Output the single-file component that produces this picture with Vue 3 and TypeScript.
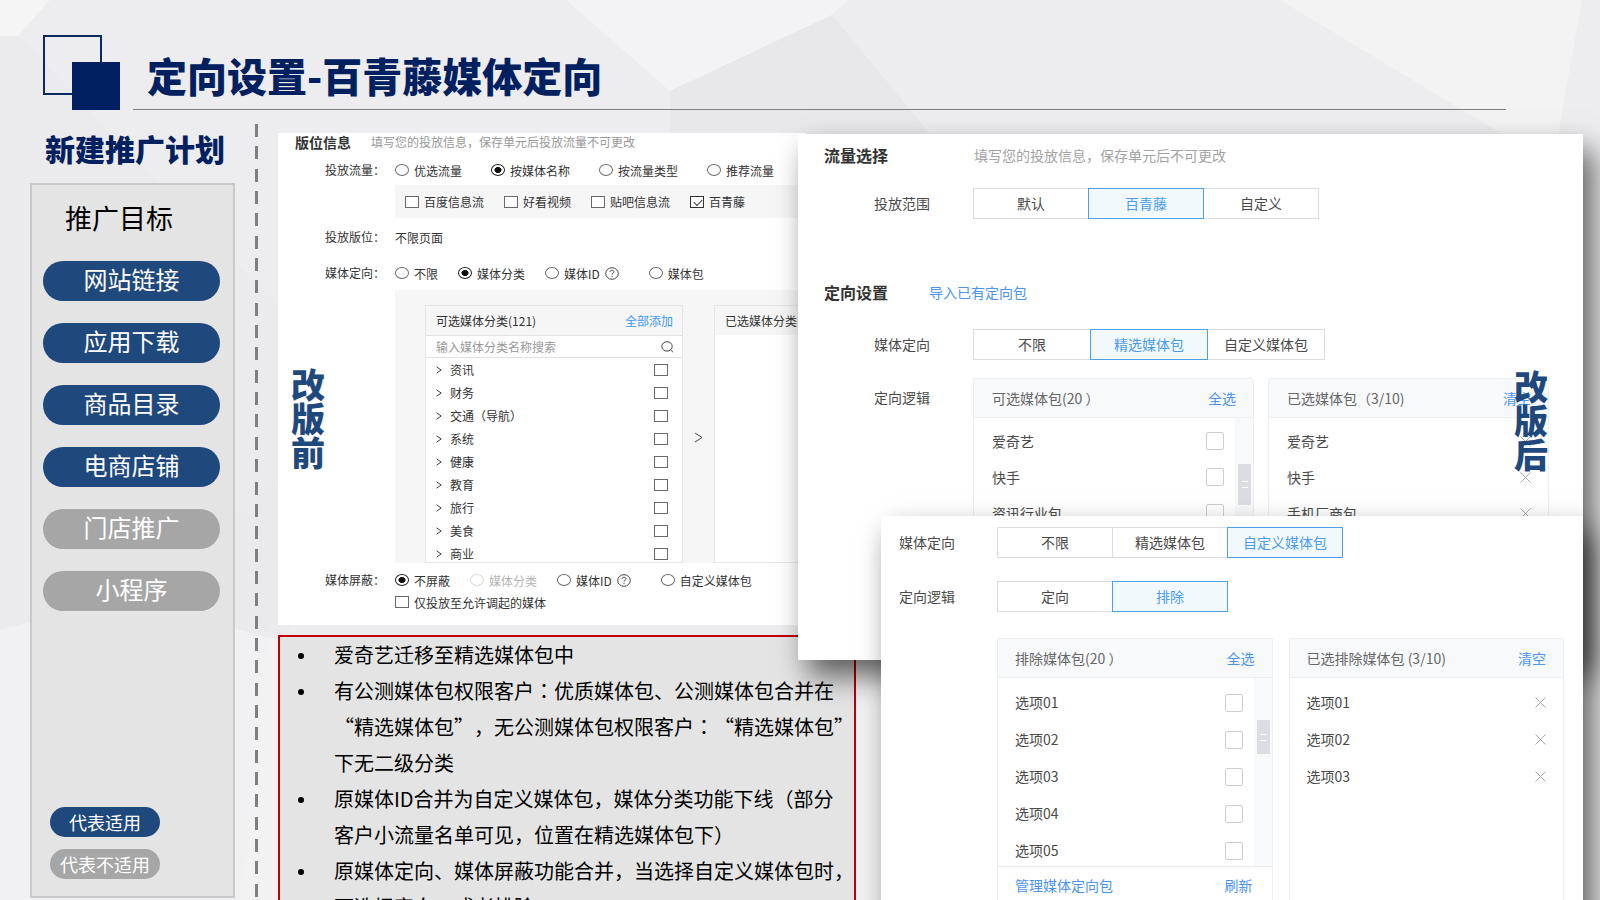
<script setup lang="ts">
import { ref } from 'vue'

interface Option { text: string; checked?: boolean; disabled?: boolean; help?: boolean; wide?: boolean }

const goals = [
  { text: '网站链接', on: true },
  { text: '应用下载', on: true },
  { text: '商品目录', on: true },
  { text: '电商店铺', on: true },
  { text: '门店推广', on: false },
  { text: '小程序', on: false },
]

const flows: Option[] = [
  { text: '优选流量', wide: true },
  { text: '按媒体名称', checked: true, wide: true },
  { text: '按流量类型', wide: true },
  { text: '推荐流量' },
]
const channels: Option[] = [
  { text: '百度信息流' },
  { text: '好看视频' },
  { text: '贴吧信息流' },
  { text: '百青藤', checked: true },
]
const targets: Option[] = [
  { text: '不限' },
  { text: '媒体分类', checked: true },
  { text: '媒体ID', help: true, wide: true },
  { text: '媒体包' },
]
const blocks: Option[] = [
  { text: '不屏蔽', checked: true },
  { text: '媒体分类', disabled: true },
  { text: '媒体ID', help: true, wide: true },
  { text: '自定义媒体包' },
]
const categories = ['资讯', '财务', '交通（导航）', '系统', '健康', '教育', '旅行', '美食', '商业']

const scopes = ['默认', '百青藤', '自定义']
const mediaModes = ['不限', '精选媒体包', '自定义媒体包']
const logics = ['定向', '排除']
const scope = ref('百青藤')
const modeA = ref('精选媒体包')
const modeB = ref('自定义媒体包')
const logic = ref('排除')

const packs = ['爱奇艺', '快手', '资讯行业包']
const chosenPacks = ['爱奇艺', '快手', '手机厂商包']
const options = ['选项01', '选项02', '选项03', '选项04', '选项05']
const chosenOptions = ['选项01', '选项02', '选项03']

const notes = [
  ['爱奇艺迁移至精选媒体包中'],
  ['有公测媒体包权限客户：优质媒体包、公测媒体包合并在', '“精选媒体包”，无公测媒体包权限客户：“精选媒体包”', '下无二级分类'],
  ['原媒体ID合并为自定义媒体包，媒体分类功能下线（部分', '客户小流量名单可见，位置在精选媒体包下）'],
  ['原媒体定向、媒体屏蔽功能合并，当选择自定义媒体包时，', '可选择定向，或者排除'],
]
// Colons are set centred in their cell, so they are split out of the line.
const pieces = (line: string) => line.split(/(：)/).filter((s) => s.length > 0)
const isMark = (s: string) => s === '：'
</script>

<template>
  <main class="slide">
    <svg class="backdrop" viewBox="0 0 1600 900" preserveAspectRatio="none" aria-hidden="true">
      <polygon points="0,0 50,0 18,36 0,36" fill="#f5f5f6" />
      <polygon points="0,36 18,36 300,330 240,900 0,900" fill="#eaeaec" opacity=".5" />
      <polygon points="566,0 848,0 832,15 670,91" fill="#f3f3f5" />
      <polygon points="670,91 832,15 930,134 670,134" fill="#e8e8ea" />
      <polygon points="1280,0 1582,0 1558,134 1502,134" fill="#f3f3f4" />
      <polygon points="0,630 110,600 280,640 900,640 900,900 0,900" fill="#f3f3f5" opacity=".7" />
      <polygon points="234,520 290,470 290,640 234,620" fill="#e9e9ec" opacity=".6" />
    </svg>

    <header class="head">
      <svg class="logo" width="77" height="75" viewBox="0 0 77 75" aria-hidden="true">
        <rect x="1" y="1" width="57" height="58" fill="none" stroke="#0b2a63" stroke-width="2" />
        <rect x="29" y="27" width="48" height="48" fill="#002060" />
      </svg>
      <h1 class="title">定向设置-百青藤媒体定向</h1>
    </header>

    <div class="body">
      <aside class="side">
        <h2 class="side-title">新建推广计划</h2>
        <div class="side-box">
          <h3 class="goal-title">推广目标</h3>
          <div class="goals">
            <button v-for="g in goals" :key="g.text" type="button" class="pill" :class="{ off: !g.on }">{{ g.text }}</button>
          </div>
          <div class="legend">
            <span class="tag">代表适用</span>
            <span class="tag off">代表不适用</span>
          </div>
        </div>
      </aside>

      <div class="dashes" aria-hidden="true"><i v-for="n in 35" :key="n"></i></div>

      <div class="work">
        <div class="left">
          <section class="old">
            <div class="stamp stamp-old">改版前</div>
            <div class="old-head"><h3>版位信息</h3><span>填写您的投放信息，保存单元后投放流量不可更改</span></div>

            <div class="row r1">
              <span class="lab">投放流量：</span>
              <label v-for="o in flows" :key="o.text" class="opt" :class="{ wide: o.wide }">
                <input type="radio" name="flow" :checked="o.checked" />{{ o.text }}
              </label>
            </div>
            <div class="bar">
              <label v-for="o in channels" :key="o.text" class="opt">
                <input type="checkbox" :checked="o.checked" />{{ o.text }}
              </label>
            </div>
            <div class="row r2"><span class="lab">投放版位：</span><span>不限页面</span></div>
            <div class="row r3">
              <span class="lab">媒体定向：</span>
              <label v-for="o in targets" :key="o.text" class="opt" :class="{ wide: o.wide }">
                <input type="radio" name="target" :checked="o.checked" />{{ o.text }}
                <svg v-if="o.help" class="help" width="14" height="13" viewBox="0 0 14 13" aria-hidden="true">
                  <ellipse cx="7" cy="6.5" rx="6.3" ry="5.8" />
                  <path d="M5 5.1C5 3.9 5.8 3.3 7 3.3s2 .6 2 1.6C9 6.2 7 6.2 7 7.6M7 8.9v1.1" />
                </svg>
              </label>
            </div>

            <div class="picker">
              <div class="cat">
                <div class="cat-head"><span>可选媒体分类(121)</span><a href="#">全部添加</a></div>
                <div class="search">
                  <input type="text" placeholder="输入媒体分类名称搜索" aria-label="输入媒体分类名称搜索" />
                  <svg width="13" height="12" viewBox="0 0 13 12" aria-hidden="true">
                    <ellipse cx="6" cy="5.4" rx="5.2" ry="4.7" /><path d="M9.6 8.9L12 11.2" />
                  </svg>
                </div>
                <ul class="cats">
                  <li v-for="c in categories" :key="c">
                    <svg width="6" height="8" viewBox="0 0 6 8" aria-hidden="true"><path d="M.5.8L5.2 4 .5 7.2" /></svg>
                    <label><span>{{ c }}</span><input type="checkbox" /></label>
                  </li>
                </ul>
              </div>
              <svg class="to" width="9" height="11" viewBox="0 0 9 11" aria-hidden="true"><path d="M1 1l7 4.5L1 10" /></svg>
              <div class="cat rest"><div class="cat-head"><span>已选媒体分类(0)</span></div></div>
            </div>

            <div class="row r4">
              <span class="lab">媒体屏蔽：</span>
              <label v-for="o in blocks" :key="o.text" class="opt" :class="{ wide: o.wide, dim: o.disabled }">
                <input type="radio" name="block" :checked="o.checked" :disabled="o.disabled" />{{ o.text }}
                <svg v-if="o.help" class="help" width="14" height="13" viewBox="0 0 14 13" aria-hidden="true">
                  <ellipse cx="7" cy="6.5" rx="6.3" ry="5.8" />
                  <path d="M5 5.1C5 3.9 5.8 3.3 7 3.3s2 .6 2 1.6C9 6.2 7 6.2 7 7.6M7 8.9v1.1" />
                </svg>
              </label>
            </div>
            <div class="row r5"><label class="opt"><input type="checkbox" />仅投放至允许调起的媒体</label></div>
          </section>

          <section class="notes">
            <ul>
              <li v-for="(n, i) in notes" :key="i">
                <span v-for="line in n" :key="line" class="line"><template v-for="(p, k) in pieces(line)" :key="k"><span :class="{ mark: isMark(p) }">{{ p }}</span></template></span>
              </li>
            </ul>
          </section>
        </div>

        <div class="right">
          <section class="card one">
            <div class="stamp stamp-new">改版后</div>
            <div class="card-head"><h3>流量选择</h3><span class="hint">填写您的投放信息，保存单元后不可更改</span></div>
            <div class="field f1">
              <span class="name">投放范围</span>
              <div class="seg">
                <button v-for="s in scopes" :key="s" type="button" :class="{ on: s === scope }" @click="scope = s">{{ s }}</button>
              </div>
            </div>
            <div class="card-head h2"><h3>定向设置</h3><a href="#">导入已有定向包</a></div>
            <div class="field f2">
              <span class="name">媒体定向</span>
              <div class="seg broad">
                <button v-for="s in mediaModes" :key="s" type="button" :class="{ on: s === modeA }" @click="modeA = s">{{ s }}</button>
              </div>
            </div>
            <div class="field f3">
              <span class="name top">定向逻辑</span>
              <div class="boxes">
                <div class="box">
                  <div class="box-head"><span>可选媒体包(20 ）</span><a href="#">全选</a></div>
                  <div class="box-body">
                    <ul><li v-for="p in packs" :key="p"><label><span>{{ p }}</span><input type="checkbox" /></label></li></ul>
                    <div class="track"><i></i></div>
                  </div>
                </div>
                <div class="box">
                  <div class="box-head"><span>已选媒体包（3/10)</span><a href="#">清空</a></div>
                  <ul class="picked">
                    <li v-for="p in chosenPacks" :key="p">{{ p }}
                      <button type="button" :aria-label="p"><svg width="11" height="11" viewBox="0 0 11 11"><path d="M.5.5l10 10M10.5.5l-10 10" /></svg></button>
                    </li>
                  </ul>
                </div>
              </div>
            </div>
          </section>

          <section class="card two">
            <div class="field">
              <span class="name">媒体定向</span>
              <div class="seg">
                <button v-for="s in mediaModes" :key="s" type="button" :class="{ on: s === modeB }" @click="modeB = s">{{ s }}</button>
              </div>
            </div>
            <div class="field g2">
              <span class="name">定向逻辑</span>
              <div class="seg">
                <button v-for="s in logics" :key="s" type="button" :class="{ on: s === logic }" @click="logic = s">{{ s }}</button>
              </div>
            </div>
            <div class="boxes">
              <div class="box">
                <div class="box-head"><span>排除媒体包(20 ）</span><a href="#">全选</a></div>
                <div class="box-body">
                  <ul><li v-for="p in options" :key="p"><label><span>{{ p }}</span><input type="checkbox" /></label></li></ul>
                  <div class="track"><i></i></div>
                </div>
                <div class="box-foot"><a href="#">管理媒体定向包</a><a href="#">刷新</a></div>
              </div>
              <div class="box">
                <div class="box-head"><span>已选排除媒体包 (3/10)</span><a href="#">清空</a></div>
                <ul class="picked">
                  <li v-for="p in chosenOptions" :key="p">{{ p }}
                    <button type="button" :aria-label="p"><svg width="11" height="11" viewBox="0 0 11 11"><path d="M.5.5l10 10M10.5.5l-10 10" /></svg></button>
                  </li>
                </ul>
              </div>
            </div>
          </section>
        </div>
      </div>
    </div>
  </main>
</template>

<style>
body { background: #ededef; }
</style>

<style scoped>
* { box-sizing: border-box; margin: 0; padding: 0; }
ul { list-style: none; }
a { color: #4a94ee; text-decoration: none; }
button, input { font: inherit; color: inherit; }
.slide {
  position: relative;
  display: flex;
  flex-direction: column;
  height: 100vh;
  overflow: hidden;
  background: #ededef;
  font-family: "Noto Sans CJK SC", "Liberation Sans", sans-serif;
  text-spacing-trim: space-all;
  white-space: nowrap;
}
.backdrop { position: absolute; inset: 0; width: 100%; height: 100%; }

.head { position: relative; display: flex; padding: 35px 94px 0 43px; }
.logo { flex: none; }
.title {
  flex: 1;
  height: 75px;
  margin-left: 13px;
  padding-left: 14px;
  border-bottom: 1px solid #7f7f7f;
  font-size: 40px;
  line-height: 80px;
  font-weight: 900;
  color: #002060;
}

.body { position: relative; flex: 1; display: flex; min-height: 0; padding: 0 17px 0 30px; }
.side { flex: none; width: 205px; display: flex; flex-direction: column; padding: 18px 0 2px; }
.side-title { font-size: 30px; line-height: 40px; margin-bottom: 15px; padding-left: 15px; font-weight: 900; color: #002060; }
.side-box {
  flex: 1;
  display: flex;
  flex-direction: column;
  padding: 15px 13px 17px 11px;
  border: 2px solid #c9c9cb;
  background: #e4e4e4;
}
.goal-title { margin: 0 0 25px 22px; font-size: 27px; line-height: 36px; font-weight: 400; color: #000; }
.goals { display: flex; flex-direction: column; gap: 22px; }
.pill { height: 40px; padding-bottom: 4px; border: 0; border-radius: 20px; background: #1f497d; color: #fff; font-size: 24px; line-height: 36px; }
.legend { display: flex; flex-direction: column; gap: 12px; width: 110px; margin: auto 0 0 7px; }
.tag { height: 30px; border-radius: 15px; background: #1f497d; color: #fff; font-size: 18px; line-height: 30px; text-align: center; }
.off { background: #a6a6a6; }

.dashes { flex: none; width: 3px; margin: 14px 20px 3px 20px; display: flex; flex-direction: column; justify-content: space-between; }
.dashes i { height: 13px; background: #7f7f7f; }

.work { flex: 1; min-width: 0; display: grid; grid-template-columns: minmax(0, 520fr) minmax(0, 83fr) minmax(0, 702fr); padding-top: 23px; }
.left { grid-column: 1 / 3; grid-row: 1; display: flex; flex-direction: column; margin-right: 25px; }
.right { grid-column: 2 / 4; grid-row: 1; display: flex; flex-direction: column; padding-top: 1px; z-index: 1; }

.stamp { position: absolute; z-index: 2; width: 34px; font-size: 34px; line-height: 34px; font-weight: 900; color: #1f497d; white-space: normal; word-break: break-all; }
.stamp-old { left: 13px; top: 234px; }
.stamp-new { right: 35px; top: 235px; }

.old { position: relative; overflow: hidden; margin-right: 50px; padding-bottom: 13px; background: #fff; font-size: 12px; color: #333; }
.old-head { display: flex; gap: 20px; height: 18px; line-height: 18px; padding-left: 17px; color: #999; }
.old-head h3 { font-size: 14px; color: #333; }
.row { display: flex; align-items: center; height: 24px; padding-left: 47px; }
.lab { width: 70px; padding-bottom: 2px; }
.r1 { margin-top: 7px; }
.r1 .opt.wide { margin-right: 29px; }
.r2 { margin-top: 7px; }
.r3 { margin-top: 12px; }
.r4 { margin-top: 5px; }
.r5 { height: 20px; padding-left: 117px; }
.opt { display: flex; align-items: center; gap: 5px; margin-right: 20px; }
.opt.wide { margin-right: 30px; }
.opt.dim { color: #b5b5b5; }
.bar { display: flex; align-items: center; height: 33px; margin: 3px 0 0 117px; padding-left: 10px; background: #f6f6f6; }
.old input[type="radio"], .old input[type="checkbox"] {
  appearance: none;
  position: relative;
  flex: none;
  width: 14px;
  height: 12px;
  border: 1px solid #6a6a6a;
  background: #fff;
}
.old input[type="radio"] { border-radius: 50%; }
.old input[type="radio"]:checked { border-color: #222; background: radial-gradient(ellipse, #111 0 38%, #fff 46%); }
.old input:disabled { border-color: #d8d8d8; }
.old input[type="checkbox"]:checked { border-color: #333; }
.old input[type="checkbox"]:checked::after {
  content: "";
  position: absolute;
  left: 3px;
  top: 2px;
  width: 7px;
  height: 4px;
  border: solid #333;
  border-width: 0 0 1px 1px;
  transform: rotate(-45deg);
}
.old svg { flex: none; fill: none; stroke: #444; stroke-width: 1; }

.picker { display: flex; height: 273px; margin: 5px 0 0 117px; padding: 15px 0 0 30px; background: #f6f6f6; }
.cat { display: flex; flex-direction: column; flex: none; width: 258px; border: 1px solid #e6e6e6; background: #fff; }
.cat-head { flex: none; display: flex; justify-content: space-between; height: 29px; padding: 0 9px 0 10px; line-height: 29px; background: #f6f6f6; }
.cat-head a { color: #3c98f2; }
.search { flex: none; display: flex; align-items: center; height: 23px; padding: 0 8px 0 10px; border: solid #e2e2e2; border-width: 1px 0; }
.search input { flex: 1; min-width: 0; border: 0; outline: 0; background: none; }
.search input::placeholder { color: #999; }
.cats li { height: 23px; display: flex; align-items: center; padding: 0 14px 0 10px; }
.cats label { flex: 1; display: flex; align-items: center; justify-content: space-between; margin-left: 8px; }
.to { align-self: center; margin: 6px 11px 0; }

.notes { margin-top: 10px; border: 2px solid #c00000; background: #e4e4e4; font-size: 20px; line-height: 36px; color: #000; }
.notes li { position: relative; padding-left: 54px; }
.notes li::before { content: ""; position: absolute; left: 18px; top: 16px; width: 6px; height: 6px; border-radius: 50%; background: #000; }
.line { display: block; }
.mark { font-family: "Noto Sans CJK TC", sans-serif; }

.card { position: relative; background: #fff; box-shadow: 10px 16px 28px rgba(0, 0, 0, .6); font-size: 14px; color: #4a4a4a; }
.one { flex: none; height: 526px; padding: 9px 34px 0 26px; }
.two { flex: 1; margin: -144px 0 0; margin-left: calc(100% * 83 / 785); z-index: 3; padding: 11px 19px 0 18px; }
.card-head { display: flex; align-items: center; height: 24px; }
.card-head h3 { width: 105px; font-size: 16px; color: #333; }
.hint { margin-left: 45px; color: #a3a3a3; }
.h2 { margin-top: 61px; }
.field { display: flex; align-items: center; }
.one .field { padding-left: 50px; }
.name { width: 99px; padding-bottom: 2px; }
.two .name { width: 98px; }
.name.top { align-self: flex-start; line-height: 38px; }
.f1 { margin-top: 21px; }
.f2 { margin-top: 25px; }
.f3 { margin-top: 18px; }
.g2 { margin-top: 23px; }
.seg { display: flex; padding-right: 1px; }
.seg button { width: 116px; height: 31px; margin-right: -1px; padding-bottom: 2px; border: 1px solid #dcdcdc; background: #fff; line-height: 26px; }
.seg.broad button { width: 118px; }
.seg button.on { position: relative; border-color: #4c9fe8; background: #f2f9fd; color: #4a9cea; }

.boxes { flex: 1; display: grid; grid-template-columns: 1fr 1fr; gap: 14px; }
.two .boxes { gap: 16px; margin: 26px 0 0 98px; min-height: 270px; }
.box { border: 1px solid #eceef1; border-radius: 2px; }
.box-head { display: flex; justify-content: space-between; height: 39px; padding: 0 17px 0 18px; border-bottom: 1px solid #eceef1; background: #f8f9fb; line-height: 38px; color: #666; }
.two .box-head, .two .picked { padding-left: 17px; }
.box-body { display: flex; }
.box-body ul { flex: 1; padding: 5px 11px 0 18px; }
.picked { padding: 5px 17px 0 18px; }
.two .box-body { height: 188px; }
.two .box-body ul { padding: 6px 11px 0 17px; }
.two .picked { padding-top: 6px; }
.box li { height: 36px; line-height: 36px; }
.two .box li { height: 37px; line-height: 37px; }
.box label, .picked li { display: flex; align-items: center; justify-content: space-between; height: 100%; }
.box input { appearance: none; width: 18px; height: 18px; border: 1px solid #cdcdcd; border-radius: 2px; background: #fff; }
.picked button { display: flex; padding: 0; border: 0; background: none; }
.picked svg { fill: none; stroke: #a8a8a8; stroke-width: 1; }
.track { width: 18px; padding: 46px 2px 0 3px; background: #f8f9fb; }
.track i { display: flex; height: 41px; border-radius: 1px; background: #dcdde0; align-items: center; justify-content: center; }
.track i::after { content: ""; width: 6px; height: 5px; border: solid #fff; border-width: 1px 0; }
.two .track { padding-top: 42px; }
.two .track i { height: 34px; }
.box-foot { display: flex; justify-content: space-between; padding: 0 19px 0 17px; border-top: 1px solid #e8eaed; line-height: 36px; }
</style>
